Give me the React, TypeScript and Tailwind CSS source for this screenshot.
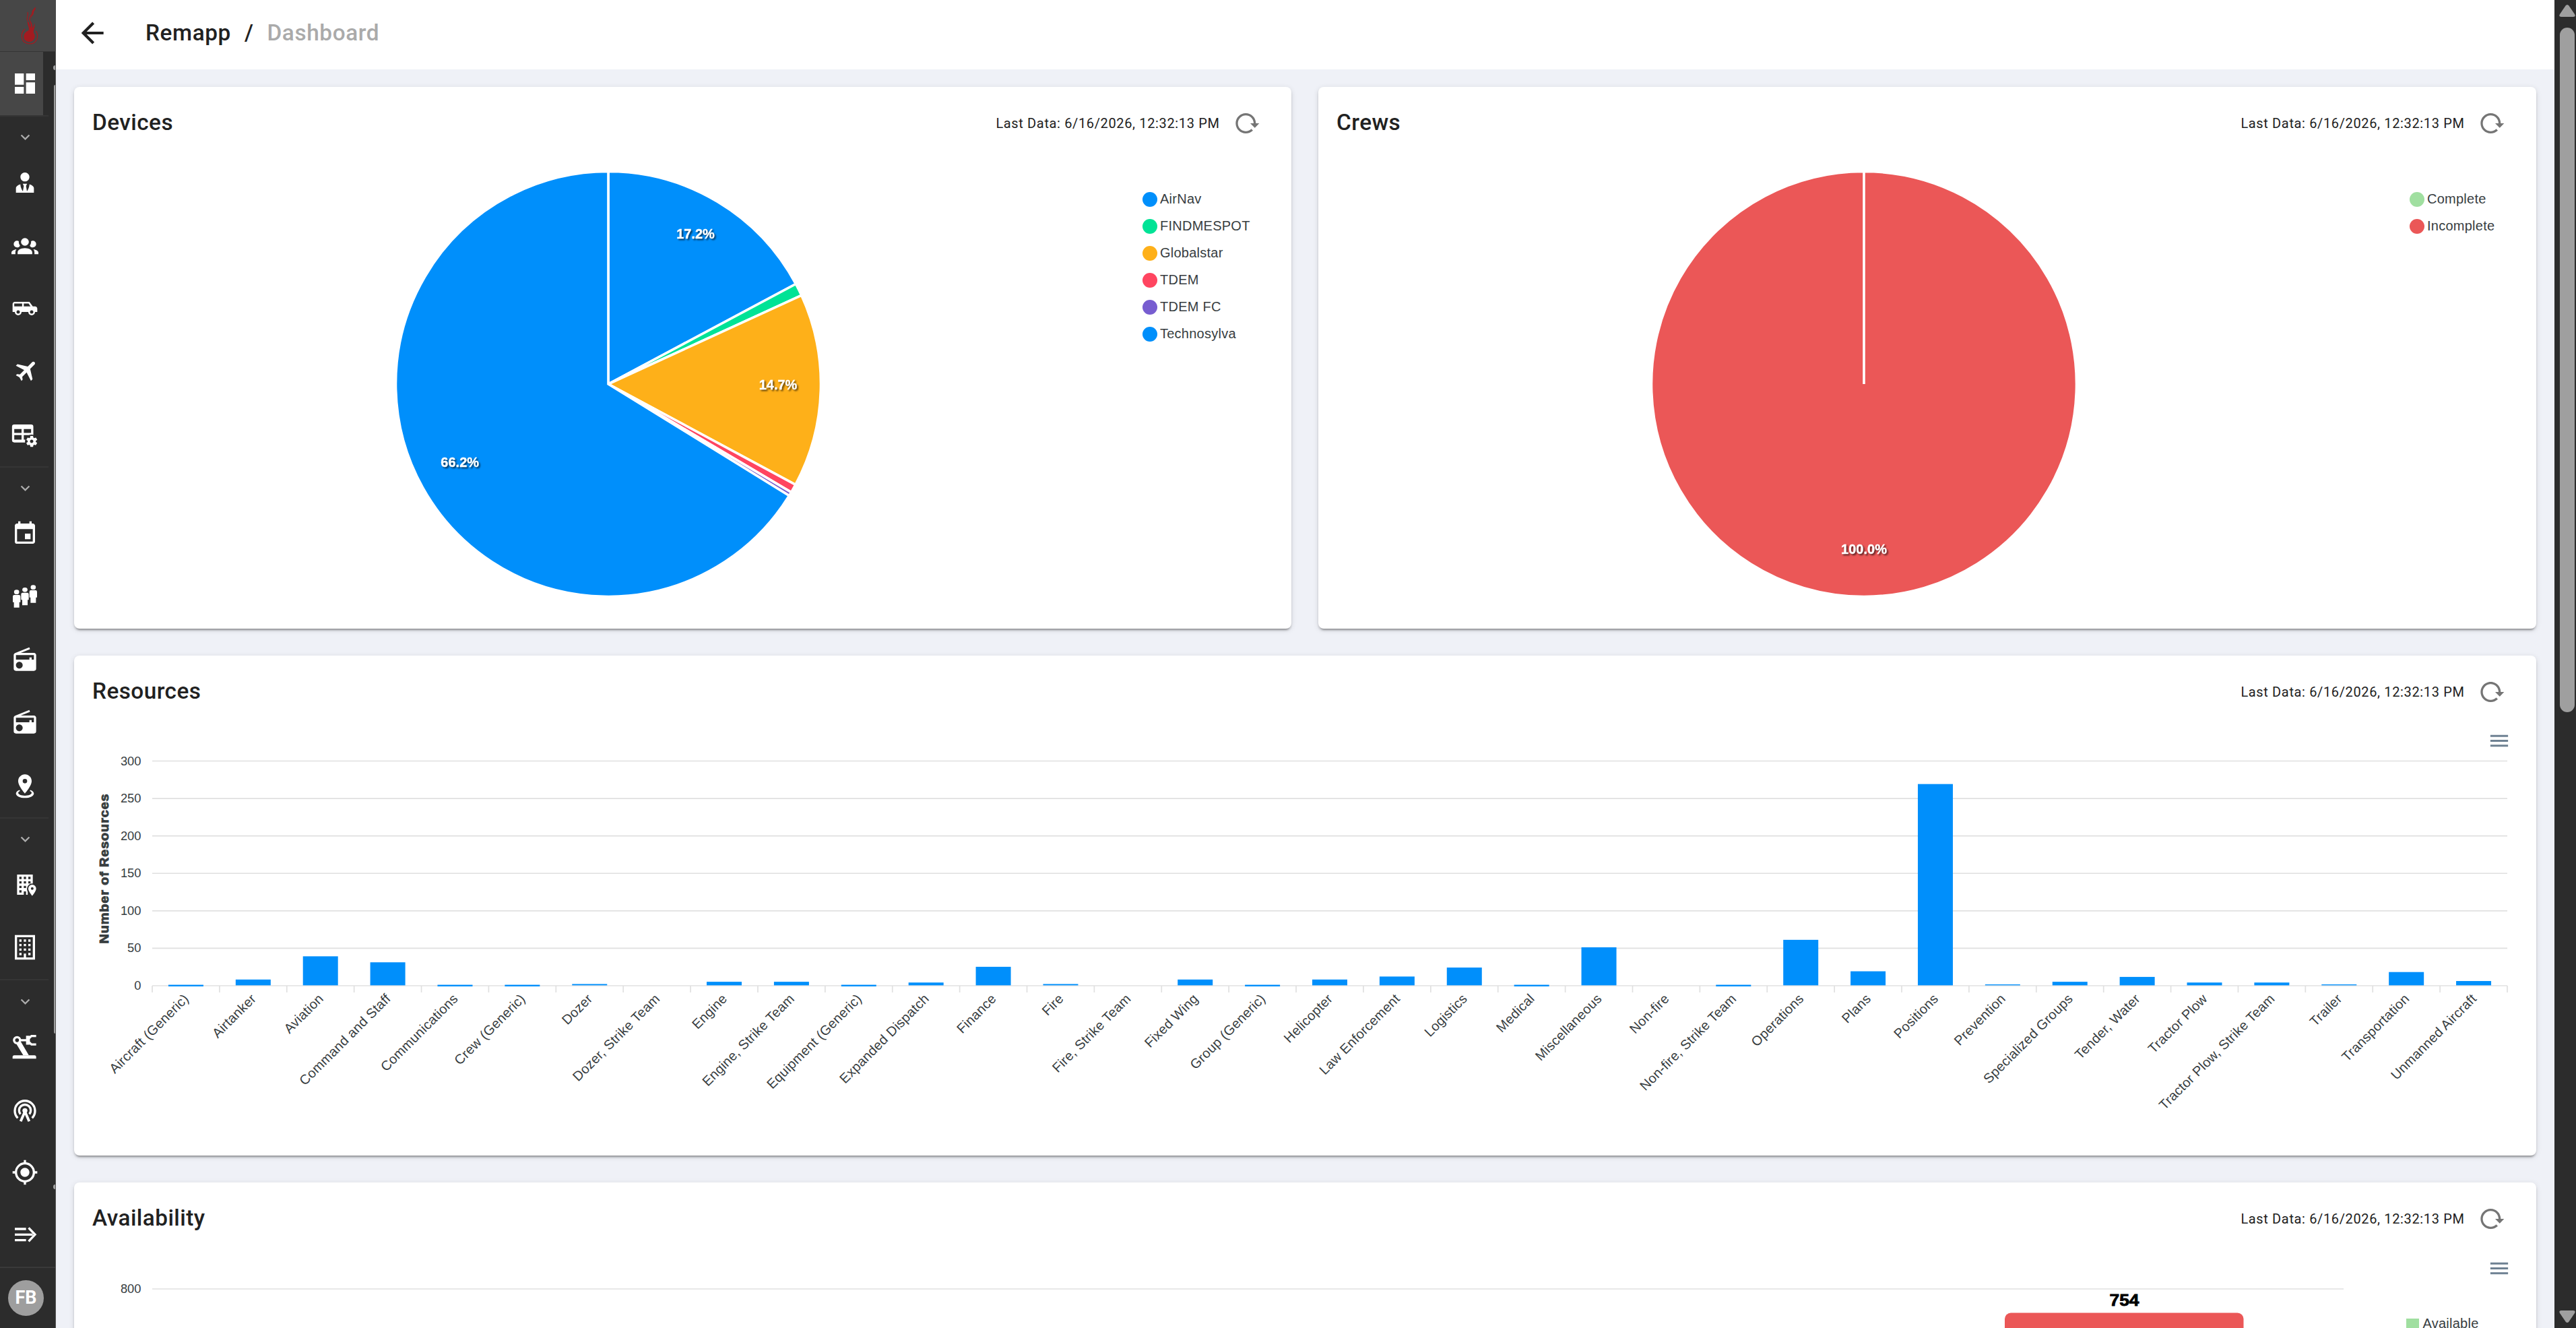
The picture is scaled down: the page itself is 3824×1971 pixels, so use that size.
import type { ReactNode } from 'react';
import { MdDashboard, MdEvent, MdGpsFixed, MdKeyboardArrowDown, MdRadio } from 'react-icons/md';

const LAST_DATA = 'Last Data: 6/16/2026, 12:32:13 PM';

const resources: { name: string; value: number }[] = [
  { name: 'Aircraft (Generic)', value: 1 },
  { name: 'Airtanker', value: 8 },
  { name: 'Aviation', value: 39 },
  { name: 'Command and Staff', value: 31 },
  { name: 'Communications', value: 1 },
  { name: 'Crew (Generic)', value: 1 },
  { name: 'Dozer', value: 2 },
  { name: 'Dozer, Strike Team', value: 0 },
  { name: 'Engine', value: 5 },
  { name: 'Engine, Strike Team', value: 5 },
  { name: 'Equipment (Generic)', value: 1 },
  { name: 'Expanded Dispatch', value: 4 },
  { name: 'Finance', value: 25 },
  { name: 'Fire', value: 2 },
  { name: 'Fire, Strike Team', value: 0 },
  { name: 'Fixed Wing', value: 8 },
  { name: 'Group (Generic)', value: 1 },
  { name: 'Helicopter', value: 8 },
  { name: 'Law Enforcement', value: 12 },
  { name: 'Logistics', value: 24 },
  { name: 'Medical', value: 1 },
  { name: 'Miscellaneous', value: 51 },
  { name: 'Non-fire', value: 0 },
  { name: 'Non-fire, Strike Team', value: 1 },
  { name: 'Operations', value: 61 },
  { name: 'Plans', value: 19 },
  { name: 'Positions', value: 269 },
  { name: 'Prevention', value: 1.5 },
  { name: 'Specialized Groups', value: 5 },
  { name: 'Tender, Water', value: 11.5 },
  { name: 'Tractor Plow', value: 4 },
  { name: 'Tractor Plow, Strike Team', value: 4 },
  { name: 'Trailer', value: 1.5 },
  { name: 'Transportation', value: 18 },
  { name: 'Unmanned Aircraft', value: 6 },
];

type Slice = { name: string; color: string; share: number };

const devices: Slice[] = [
  { name: 'AirNav', color: '#008ffb', share: 17.2 },
  { name: 'FINDMESPOT', color: '#00e396', share: 0.95 },
  { name: 'Globalstar', color: '#feb019', share: 14.7 },
  { name: 'TDEM', color: '#ff4560', share: 0.65 },
  { name: 'TDEM FC', color: '#775dd0', share: 0.3 },
  { name: 'Technosylva', color: '#008ffb', share: 66.2 },
];

const crews: Slice[] = [
  { name: 'Complete', color: '#a0dfa0', share: 0 },
  { name: 'Incomplete', color: '#eb5757', share: 100 },
];

/* ---------- icons ---------- */

function Icon({ children, size = 40 }: { children: ReactNode; size?: number }) {
  return (
    <svg width={size} height={size} viewBox="0 0 24 24" fill="currentColor">
      {children}
    </svg>
  );
}

const AccountTie = () => (
  <Icon>
    <path d="M12 3C14.21 3 16 4.79 16 7S14.21 11 12 11 8 9.21 8 7 9.79 3 12 3M16 13.54C16 14.6 15.72 17.07 13.81 19.83L13 15L13.94 13.12C13.32 13.05 12.67 13 12 13S10.68 13.05 10.06 13.12L11 15L10.19 19.83C8.28 17.07 8 14.6 8 13.54C5.61 14.24 4 15.5 4 17V21H20V17C20 15.5 18.4 14.24 16 13.54Z" />
  </Icon>
);

const AccountGroup = () => (
  <Icon>
    <path d="M12,5.5A3.5,3.5 0 0,1 15.5,9A3.5,3.5 0 0,1 12,12.5A3.5,3.5 0 0,1 8.5,9A3.5,3.5 0 0,1 12,5.5M5,8C5.56,8 6.08,8.15 6.53,8.42C6.38,9.85 6.8,11.27 7.66,12.38C7.16,13.34 6.16,14 5,14A3,3 0 0,1 2,11A3,3 0 0,1 5,8M19,8A3,3 0 0,1 22,11A3,3 0 0,1 19,14C17.84,14 16.84,13.34 16.34,12.38C17.2,11.27 17.62,9.85 17.47,8.42C17.92,8.15 18.44,8 19,8M5.5,18.25C5.5,16.18 8.41,14.5 12,14.5C15.59,14.5 18.5,16.18 18.5,18.25V20H5.5V18.25M0,20V18.5C0,17.11 1.89,15.94 4.45,15.6C3.86,16.28 3.5,17.22 3.5,18.25V20H0M24,20H20.5V18.25C20.5,17.22 20.14,16.28 19.55,15.6C22.11,15.94 24,17.11 24,18.5V20Z" />
  </Icon>
);

const Van = () => (
  <Icon>
    <path
      fillRule="evenodd"
      d="M3 6C1.89 6 1 6.89 1 8V15H3A3 3 0 0 0 9 15H15A3 3 0 0 0 21 15H23V12C23 10.89 22.11 10 21 10H19L16 6ZM2.5 7.5H9.5V10H2.5ZM11 7.5H15.25L17 10H11ZM6 13.5A1.5 1.5 0 1 1 6 16.5A1.5 1.5 0 1 1 6 13.5ZM18 13.5A1.5 1.5 0 1 1 18 16.5A1.5 1.5 0 1 1 18 13.5Z"
    />
  </Icon>
);

const Airplane = () => (
  <Icon>
    <path d="M20.56 3.91C21.15 4.5 21.15 5.45 20.56 6.03L16.67 9.92L18.79 19.11L17.38 20.53L13.5 13.1L9.6 17L9.96 19.47L8.89 20.53L7.13 17.35L3.94 15.58L5 14.5L7.5 14.87L11.37 11L3.94 7.09L5.36 5.68L14.55 7.8L18.44 3.91C19 3.33 20 3.33 20.56 3.91Z" />
  </Icon>
);

const TableCog = () => (
  <Icon>
    <path fillRule="evenodd" d="M2.5 3H17.5A2 2 0 0 1 19.5 5V19H2.5A2 2 0 0 1 .5 17V5A2 2 0 0 1 2.5 3ZM2.5 7V10.5H9V7ZM11 7V10.5H17.5V7ZM2.5 12.5V16.5H9V12.5ZM11 12.5V16.5H17.5V12.5Z" />
    <circle cx="18" cy="18" r="6" fill="#2c2c2c" />
    <path d="M21.7 18.6V17.6L22.8 16.8C22.9 16.7 23 16.6 22.9 16.5L21.9 14.8C21.9 14.7 21.7 14.7 21.6 14.7L20.4 15.2C20.1 15 19.8 14.8 19.5 14.7L19.3 13.4C19.3 13.3 19.2 13.2 19.1 13.2H17.1C16.9 13.2 16.8 13.3 16.8 13.4L16.6 14.7C16.3 14.9 16.1 15 15.8 15.2L14.6 14.7C14.5 14.7 14.4 14.7 14.3 14.8L13.3 16.5C13.3 16.6 13.3 16.7 13.4 16.8L14.5 17.6V18.6L13.4 19.4C13.3 19.5 13.2 19.6 13.3 19.7L14.3 21.4C14.4 21.5 14.5 21.5 14.6 21.5L15.8 21C16 21.2 16.3 21.4 16.6 21.5L16.8 22.8C16.9 22.9 17 23 17.1 23H19.1C19.2 23 19.3 22.9 19.3 22.8L19.5 21.5C19.8 21.3 20 21.2 20.3 21L21.5 21.4C21.6 21.4 21.7 21.4 21.8 21.3L22.8 19.6C22.9 19.5 22.9 19.4 22.8 19.4L21.7 18.6M18 19.5C17.2 19.5 16.5 18.8 16.5 18S17.2 16.5 18 16.5 19.5 17.2 19.5 18 18.8 19.5 18 19.5Z" />
  </Icon>
);

const People = () => (
  <Icon>
    {[
      [4.6, 6.2],
      [12, 4.2],
      [19.4, 2],
    ].map(([x, y]) => (
      <g key={x}>
        <ellipse cx={x} cy={y + 2} rx="2.3" ry="2" />
        <path d={`M${x - 2} ${y + 4.6}h4q1.4 0 1.4 1.4v5h-1v4.8h-4.8v-4.8h-1v-5q0-1.4 1.4-1.4z`} />
      </g>
    ))}
  </Icon>
);

const MapMarkerRadius = () => (
  <Icon>
    <path d="M12,2C15.31,2 18,4.66 18,7.95C18,12.41 12,19 12,19S6,12.41 6,7.95C6,4.66 8.69,2 12,2M12,6A2,2 0 0,0 10,8A2,2 0 0,0 12,10A2,2 0 0,0 14,8A2,2 0 0,0 12,6M20,19C20,21.21 16.42,23 12,23C7.58,23 4,21.21 4,19C4,17.71 5.22,16.56 7.11,15.83L7.75,16.74C6.67,17.19 6,17.81 6,18.5C6,19.88 8.69,21 12,21C15.31,21 18,19.88 18,18.5C18,17.81 17.33,17.19 16.25,16.74L16.89,15.83C18.78,16.56 20,17.71 20,19Z" />
  </Icon>
);

const BuildingMarker = () => (
  <Icon>
    <path
      fillRule="evenodd"
      d="M5 3H19V21H13V18H11V21H5ZM7 5V7H9V5ZM11 5V7H13V5ZM15 5V7H17V5ZM7 9V11H9V9ZM11 9V11H13V9ZM15 9V11H17V9ZM7 13V15H9V13ZM11 13V15H13V13ZM7 17V19H9V17Z"
    />
    <path d="M18.5 11a4.7 4.7 0 0 1 4.7 4.7c0 3.4-4.7 8.3-4.7 8.3h-4v-5.5a8 8 0 0 1-.7-2.8a4.7 4.7 0 0 1 4.7-4.7z" fill="#2c2c2c" />
    <path fillRule="evenodd" d="M18.5 12A3.5 3.5 0 0 1 22 15.5C22 18.1 18.5 22 18.5 22S15 18.1 15 15.5A3.5 3.5 0 0 1 18.5 12ZM18.5 14.3A1.2 1.2 0 1 0 18.5 16.7A1.2 1.2 0 1 0 18.5 14.3Z" />
  </Icon>
);

const BuildingOutline = () => (
  <Icon>
    <path d="M19 3V21H13V17.5H11V21H5V3H19M15 7H17V5H15V7M11 7H13V5H11V7M7 7H9V5H7V7M15 11H17V9H15V11M11 11H13V9H11V11M7 11H9V9H7V11M15 15H17V13H15V15M11 15H13V13H11V15M7 15H9V13H7V15M15 19H17V17H15V19M7 19H9V17H7V19M21 1H3V23H21V1Z" />
  </Icon>
);

const RobotArm = () => (
  <Icon>
    <circle cx="5" cy="6.5" r="2.7" fill="none" stroke="currentColor" strokeWidth="2" />
    <path d="M7 5.5L15.5 20H10.5L4.5 10L8.5 8Z" />
    <path d="M8 5.5h5V2.5h3.5V4.5H15.5V8.5H16.5V10.5H13V7.5H8Z" />
    <path d="M22 2.8H17.8L15.5 5V8L17.8 10.3H22" fill="none" stroke="currentColor" strokeWidth="1.9" />
    <path d="M1 23V21.5Q1 20 2.5 20H20.5Q22 20 22 21.5V23Z" />
  </Icon>
);

const Antenna = () => (
  <Icon>
    <g fill="none" stroke="currentColor" strokeWidth="2">
      <path d="M5.6 19.4A9 9 0 1 1 18.4 19.4" />
      <path d="M8 16A5.2 5.2 0 1 1 16 16" />
      <path d="M8.2 22.3L12 13.6L15.8 22.3" strokeWidth="2.3" />
    </g>
    <circle cx="12" cy="12.8" r="2.2" />
  </Icon>
);

const LinesArrow = () => (
  <Icon>
    <path d="M3 5H13V7H3ZM3 10H19V12H3ZM3 15H13V17H3Z" />
    <path d="M15.3 5L21 11L15.3 17" fill="none" stroke="currentColor" strokeWidth="2" />
  </Icon>
);

const Flame = () => (
  <svg width="30" height="56" viewBox="0 0 30 56" fill="#a31b20">
    <path d="M14 34C14 28 11 26 12 21C15 24 15 27 16 31C18 27 15 23 14 18C17 22 20 26 19 32C21 29 22 27 22 24C24 30 20 35 21 39C25 44 22 52 14 52C6 52 4 43 9 38C11 36 13 36 14 34Z" />
    <path
      d="M12 21C9 16 14 14 12 8M15 20C13 14 20 12 19 8C22 5 24 4 23 1M8 33C0 40 2 55 15 55C27 55 29 42 24 36"
      fill="none"
      stroke="#a31b20"
      strokeWidth="1.2"
    />
    <path d="M17 20C16 14 21 13 21 9C21 6 24 4 23 1C21 4 17 6 19 9C20 12 15 14 17 20Z" />
  </svg>
);

const Reload = () => (
  <svg width="40" height="40" viewBox="0 0 24 24" fill="#757575">
    <path d="M2 12C2 16.97 6.03 21 11 21C13.39 21 15.68 20.06 17.4 18.4L15.9 16.9C14.63 18.25 12.86 19 11 19C4.76 19 1.64 11.46 6.05 7.05C10.46 2.64 18 5.77 18 12H15L19 16H19.1L23 12H20C20 7.03 15.97 3 11 3C6.03 3 2 7.03 2 12Z" />
  </svg>
);

const ChartMenu = () => (
  <svg width="35" height="35" viewBox="0 0 24 24" fill="#6e8192">
    <path d="M3 18h18v-2H3v2zm0-5h18v-2H3v2zm0-7v2h18V6H3z" />
  </svg>
);

/* ---------- sidebar ---------- */

function NavItem({ active, children }: { active?: boolean; children: ReactNode }) {
  return (
    <a
      className={
        active
          ? 'flex h-[93.5px] w-16 shrink-0 items-center justify-center bg-[#474747] pl-[10px]'
          : 'flex h-[93.5px] w-16 shrink-0 items-center justify-center pl-[10px]'
      }
    >
      {children}
    </a>
  );
}

function NavSection({ children }: { children: ReactNode }) {
  return (
    <div className="w-[72px] shrink-0 border-t-2 border-[#353535]">
      <div className="flex h-[51.5px] w-16 items-end justify-center pb-[7px] pl-[10px] text-[#adadad]">
        <MdKeyboardArrowDown size={27} />
      </div>
      {children}
    </div>
  );
}

function Sidebar() {
  return (
    <aside className="relative flex w-[83px] shrink-0 flex-col border-r border-[#555] bg-[#2c2c2c] text-white">
      <div className="-mr-px flex h-[76px] shrink-0 items-center justify-end bg-[#474747] pr-6">
        <Flame />
      </div>
      <nav className="flex min-h-0 flex-1 flex-col overflow-hidden border-t border-[#353535]">
        <NavItem active>
          <MdDashboard size={40} />
        </NavItem>
        <NavSection>
          <NavItem><AccountTie /></NavItem>
          <NavItem><AccountGroup /></NavItem>
          <NavItem><Van /></NavItem>
          <NavItem><Airplane /></NavItem>
          <NavItem><TableCog /></NavItem>
        </NavSection>
        <NavSection>
          <NavItem><MdEvent size={40} /></NavItem>
          <NavItem><People /></NavItem>
          <NavItem><MdRadio size={40} /></NavItem>
          <NavItem><MdRadio size={40} /></NavItem>
          <NavItem><MapMarkerRadius /></NavItem>
        </NavSection>
        <NavSection>
          <NavItem><BuildingMarker /></NavItem>
          <NavItem><BuildingOutline /></NavItem>
        </NavSection>
        <NavSection>
          <NavItem><RobotArm /></NavItem>
          <NavItem><Antenna /></NavItem>
          <NavItem><MdGpsFixed size={40} /></NavItem>
          <NavItem><LinesArrow /></NavItem>
        </NavSection>
      </nav>
      <div className="flex h-[91px] shrink-0 items-center border-t-2 border-[#3a3a3a] pl-3">
        <div className="flex size-[53px] items-center justify-center rounded-full bg-[#9e9e9e] text-[27px] font-bold">
          FB
        </div>
      </div>
      {/* clipped scrollbar of the nav list */}
      <div className="absolute top-[126px] right-0 h-[1408px] w-[2px] rounded-l-full bg-[#a0a0a0]" />
      <div className="absolute top-[97px] right-0 h-[7px] w-[3px] rounded-l-full bg-[#a0a0a0]" />
      <div className="absolute top-[1758px] right-0 h-[7px] w-[3px] rounded-l-full bg-[#a0a0a0]" />
    </aside>
  );
}

/* ---------- cards ---------- */

function Card({ title, className, children }: { title: string; className: string; children: ReactNode }) {
  return (
    <section
      className={`flex flex-col overflow-hidden rounded-lg bg-white shadow-[0_5px_2px_-3px_rgba(0,0,0,0.2),0_3px_3px_rgba(0,0,0,0.14),0_2px_8px_rgba(0,0,0,0.12)] ${className}`}
    >
      <div className="flex h-[108px] shrink-0 items-center pr-[46px] pl-[27px]">
        <h2 className="flex-1 pb-[2px] text-[33.33px] font-medium tracking-[0.45px] text-[#212121]">{title}</h2>
        <span className="mr-[20.5px] pb-px text-[20px] tracking-[0.64px] text-[#212121]">{LAST_DATA}</span>
        <Reload />
      </div>
      {children}
    </section>
  );
}

function Legend({ items }: { items: Slice[] }) {
  return (
    <ul className="pt-[39px] font-['Liberation_Sans',Arial,sans-serif] text-[20px] tracking-[0.25px] text-[#373d3f]">
      {items.map((item) => (
        <li key={item.name} className="flex h-10 items-center gap-1 leading-none">
          <span className="size-[22px] rounded-full" style={{ backgroundColor: item.color }} />
          <span className="-mt-[2px]">{item.name}</span>
        </li>
      ))}
    </ul>
  );
}

const RADIUS = 315.5;

function Pie({ slices, labels }: { slices: Slice[]; labels: { text: string; x: number; y: number }[] }) {
  let start = 0;
  return (
    <svg width="640" height="640" viewBox="-320 -320 640 640">
      {slices.map((s) => {
        if (!s.share) return null;
        const a0 = (start / 100) * Math.PI * 2;
        start += s.share;
        const a1 = Math.min((start / 100) * Math.PI * 2, Math.PI * 2 - 0.0001);
        const large = s.share > 50 ? 1 : 0;
        const d = `M0 0L${RADIUS * Math.sin(a0)} ${-RADIUS * Math.cos(a0)}A${RADIUS} ${RADIUS} 0 ${large} 1 ${RADIUS * Math.sin(a1)} ${-RADIUS * Math.cos(a1)}Z`;
        return <path key={s.name} d={d} fill={s.color} stroke="#fff" strokeWidth="3.6" />;
      })}
      <g
        className="font-['Liberation_Sans',Arial,sans-serif] text-[20px] font-bold [filter:drop-shadow(2px_2px_1px_rgba(0,0,0,0.6))]"
        fill="#fff"
        stroke="#fff"
        strokeWidth="0.4"
        textAnchor="middle"
      >
        {labels.map((l) => (
          <text key={l.text} x={l.x} y={l.y}>
            {l.text}
          </text>
        ))}
      </g>
    </svg>
  );
}

/* ---------- resources chart ---------- */

const PLOT_LEFT = 116;
const PLOT_RIGHT = 3612;
const STEP = (PLOT_RIGHT - PLOT_LEFT) / resources.length;
const ZERO = 382;
const UNIT = 333.5 / 300;

function ResourcesChart() {
  return (
    <svg
      width="3655"
      height="630"
      viewBox="0 0 3655 630"
      className="font-['Liberation_Sans',Arial,sans-serif] text-[20px]"
      fill="#373d3f"
    >
      {[0, 50, 100, 150, 200, 250, 300].map((v) => (
        <g key={v}>
          <line x1={PLOT_LEFT} x2={PLOT_RIGHT} y1={ZERO - v * UNIT} y2={ZERO - v * UNIT} stroke="#e0e0e0" strokeWidth="1.7" />
          <text x="99.5" y={ZERO - v * UNIT + 6} textAnchor="end" fontSize="18.33">
            {v}
          </text>
        </g>
      ))}
      <text
        transform="translate(50.5 208) rotate(-90)"
        textAnchor="middle"
        fontSize="18.33"
        fontWeight="bold"
        letterSpacing="0.8"
        textLength="223"
        lengthAdjust="spacingAndGlyphs"
        stroke="#373d3f"
        strokeWidth="0.9"
      >
        Number of Resources
      </text>
      {resources.map((r, i) => {
        const cx = PLOT_LEFT + STEP * (i + 0.5);
        const top = ZERO - 0.3 - r.value * UNIT;
        const bottom = r.value === 1 ? ZERO + 1 : ZERO - 0.6;
        return (
          <g key={r.name}>
            <line x1={cx - STEP / 2} x2={cx - STEP / 2} y1={ZERO} y2={ZERO + 10} stroke="#e0e0e0" strokeWidth="1.7" />
            {r.value > 0 && <rect x={cx - 26} y={top} width="52" height={bottom - top} fill="#008ffb" />}
            <text transform={`translate(${cx + 5.5} ${ZERO + 20.5}) rotate(-45)`} textAnchor="end" letterSpacing="0.25">
              {r.name}
            </text>
          </g>
        );
      })}
      <line x1={PLOT_RIGHT} x2={PLOT_RIGHT} y1={ZERO} y2={ZERO + 10} stroke="#e0e0e0" strokeWidth="1.7" />
      <g transform="translate(3582.5 1)">
        <ChartMenu />
      </g>
    </svg>
  );
}

function AvailabilityChart() {
  return (
    <svg
      width="3655"
      height="400"
      viewBox="0 0 3655 400"
      className="font-['Liberation_Sans',Arial,sans-serif] text-[20px]"
      fill="#373d3f"
    >
      <line x1={PLOT_LEFT} x2="3369" y1="50" y2="50" stroke="#e0e0e0" strokeWidth="1.7" />
      <text x="99.5" y="56" textAnchor="end" fontSize="18.33">
        800
      </text>
      <rect x="2866" y="85.5" width="354.5" height="300" rx="9" fill="#eb5757" />
      <text
        x="3043.5"
        y="75"
        textAnchor="middle"
        fontSize="23.3"
        fontWeight="bold"
        fill="#000"
        stroke="#000"
        strokeWidth="0.8"
        textLength="44"
        lengthAdjust="spacingAndGlyphs"
      >
        754
      </text>
      <rect x="3462" y="94" width="19" height="20" fill="#a0dfa0" />
      <text x="3486.5" y="107.5" letterSpacing="0.25">
        Available
      </text>
      <g transform="translate(3582.5 2)">
        <ChartMenu />
      </g>
    </svg>
  );
}

export default function App() {
  return (
    <div className="flex h-[1971px] w-[3824px] overflow-hidden bg-[#eff1f7] font-[Roboto,sans-serif]">
      <Sidebar />

      <main className="flex min-w-0 flex-1 flex-col">
        <header className="flex h-[103px] shrink-0 items-center bg-white pb-[5px] pl-[29px] text-[33.33px] font-medium">
          <svg width="50" height="50" viewBox="0 0 24 24" fill="#212121">
            <path d="M20 11V13H8L13.5 18.5L12.08 19.92L4.16 12L12.08 4.08L13.5 5.5L8 11H20Z" />
          </svg>
          <nav className="ml-[54px] flex gap-5 tracking-[0.6px]">
            <span className="text-[#212121]">Remapp</span>
            <span className="text-[#212121]">/</span>
            <span className="text-[#aaaaaa]">Dashboard</span>
          </nav>
        </header>

        <div className="flex flex-col gap-y-[40px] px-[27px] pt-[26px]">
          <div className="flex gap-10">
            <Card title="Devices" className="h-[804px] w-[1807px]">
              <div className="flex pl-[473px]">
                <div className="mt-[12.5px]">
                  <Pie
                    slices={devices}
                    labels={[
                      { text: '17.2%', x: 129.5, y: -216.5 },
                      { text: '14.7%', x: 252, y: 7.5 },
                      { text: '66.2%', x: -220.3, y: 122.5 },
                    ]}
                  />
                </div>
                <div className="ml-[473px]">
                  <Legend items={devices} />
                </div>
              </div>
            </Card>
            <Card title="Crews" className="h-[804px] flex-1">
              <div className="flex pl-[490px]">
                <div className="mt-[12.5px]">
                  <Pie slices={crews} labels={[{ text: '100.0%', x: 0, y: 251.5 }]} />
                </div>
                <div className="ml-[490px]">
                  <Legend items={crews} />
                </div>
              </div>
            </Card>
          </div>

          <Card title="Resources" className="h-[742px]">
            <ResourcesChart />
          </Card>

          <Card title="Availability" className="h-[760px] shrink-0">
            <AvailabilityChart />
          </Card>
        </div>
      </main>

      {/* page scrollbar */}
      <div className="flex w-8 shrink-0 flex-col items-end bg-[#2c2c2c] pt-[7px] pr-px pb-2">
        <svg width="24" height="18" viewBox="0 0 24 18" fill="#9f9f9f">
          <path d="M9.5 1.5Q12-1.5 14.5 1.5L23 14Q25 18 21 18H3Q-1 18 1 14Z" />
        </svg>
        <div className="mt-4 mr-px h-[1016px] w-[22px] rounded-full bg-[#9f9f9f]" />
        <svg className="mt-auto" width="24" height="18" viewBox="0 0 24 18" fill="#9f9f9f">
          <path d="M9.5 16.5Q12 19.5 14.5 16.5L23 4Q25 0 21 0H3Q-1 0 1 4Z" />
        </svg>
      </div>
    </div>
  );
}
